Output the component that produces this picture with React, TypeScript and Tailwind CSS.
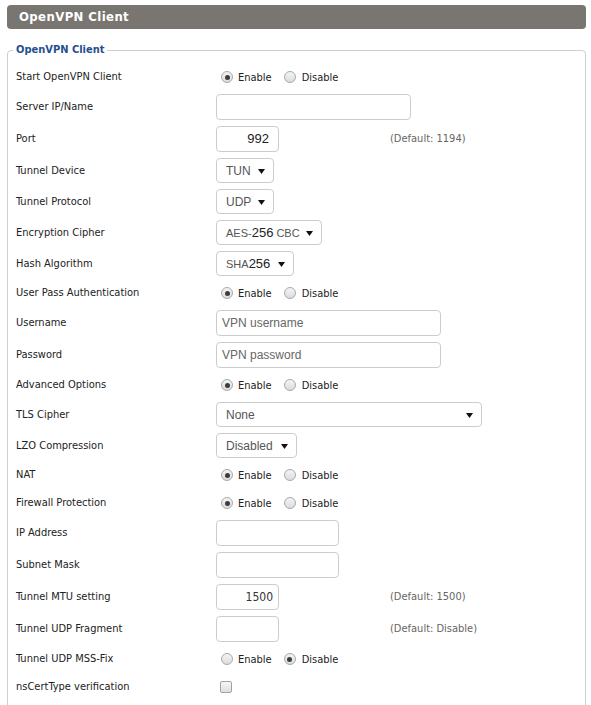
import React from "react";

const LABEL_FONT = "font-['DejaVu_Sans_Condensed','DejaVu_Sans',sans-serif]";
const FIELD_FONT = "font-['Liberation_Sans',Arial,sans-serif]";

type RowKind = "radio" | "input" | "select";

const rowHeight: Record<RowKind, string> = {
  radio: "h-[28px]",
  input: "h-[32px]",
  select: "h-[31px]",
};

function Row({
  label,
  kind,
  children,
  hint,
}: {
  label: string;
  kind: RowKind;
  children: React.ReactNode;
  hint?: string;
}) {
  return (
    <div className={`flex items-center ${rowHeight[kind]}`}>
      <div className="w-[200px] shrink-0 pt-[1px] text-[11px] text-[#222]">{label}</div>
      <div className="w-[174px] shrink-0 flex items-center">{children}</div>
      {hint && <div className="text-[11px] text-[#666]">{hint}</div>}
    </div>
  );
}

function Radio({ checked }: { checked: boolean }) {
  return (
    <span className="relative inline-flex h-[12px] w-[12px] shrink-0 items-center justify-center rounded-full border border-[#a9a9a9] bg-gradient-to-b from-[#f4f4f4] to-[#dcdcdc]">
      {checked && <span className="h-[5px] w-[5px] rounded-full bg-[#3c3c3c]" />}
    </span>
  );
}

function RadioPair({ enabled }: { enabled: boolean }) {
  return (
    <div className="flex items-center pl-[5px] text-[11px] text-[#222]">
      <div className="flex items-center">
        <Radio checked={enabled} />
        <span className="ml-[5px] mt-[3px]">Enable</span>
      </div>
      <div className="ml-[12px] flex items-center">
        <Radio checked={!enabled} />
        <span className="ml-[6px] mt-[3px]">Disable</span>
      </div>
    </div>
  );
}

function TextBox({
  width,
  value,
  placeholder,
  right,
  className = "",
}: {
  width: string;
  value?: React.ReactNode;
  placeholder?: string;
  right?: boolean;
  className?: string;
}) {
  return (
    <div
      className={`flex h-[26px] ${width} shrink-0 items-center rounded-[4px] border border-[#cccccc] bg-white ${
        right ? "justify-end pr-[9px]" : "pl-[5px]"
      } ${className}`}
    >
      {value !== undefined && value}
      {placeholder && (
        <span className={`${FIELD_FONT} text-[12px] text-[#666]`}>{placeholder}</span>
      )}
    </div>
  );
}

function SelectBox({ width, children }: { width: string; children: React.ReactNode }) {
  return (
    <div
      className={`flex h-[25px] ${width} shrink-0 items-center justify-between rounded-[4px] border border-[#cccccc] bg-white pl-[9px] pr-[8px]`}
    >
      <span className={`${FIELD_FONT} whitespace-nowrap text-[12px] text-[#555]`}>{children}</span>
      <svg width="7" height="7" viewBox="0 0 7 7" className="mt-[1px] shrink-0">
        <path d="M0 1 L7 1 L3.5 6 Z" fill="#111" />
      </svg>
    </div>
  );
}

export default function App() {
  return (
    <div className={`h-[705px] w-[591px] overflow-hidden bg-white pl-[7px] pr-[5px] pt-[5px] ${LABEL_FONT}`}>
      <div className="flex h-[24px] items-center rounded-[4px] bg-[#797571] pl-[12px]">
        <span className="text-[13px] font-bold tracking-[0.4px] text-white">OpenVPN Client</span>
      </div>

      <fieldset className="mt-[14px] rounded-[4px] border border-[#cfcfcf] pb-[10px] pl-[8px] pt-[6px]">
        <legend className="-ml-[3px] px-[3px] text-[11px] font-bold leading-[14px] text-[#25508f]">
          OpenVPN Client
        </legend>

        <Row label="Start OpenVPN Client" kind="radio">
          <RadioPair enabled />
        </Row>
        <Row label="Server IP/Name" kind="input">
          <TextBox width="w-[195px]" />
        </Row>
        <Row label="Port" kind="input" hint="(Default: 1194)">
          <TextBox
            width="w-[63px]"
            right
            value={<span className={`${FIELD_FONT} text-[13px] text-[#222]`}>992</span>}
          />
        </Row>
        <Row label="Tunnel Device" kind="select">
          <SelectBox width="w-[58px]">TUN</SelectBox>
        </Row>
        <Row label="Tunnel Protocol" kind="select">
          <SelectBox width="w-[58px]">UDP</SelectBox>
        </Row>
        <Row label="Encryption Cipher" kind="select">
          <SelectBox width="w-[106px]">
            <span className="text-[11px]">AES-</span>
            <span className="text-[13px] text-[#222]">256</span>
            <span className="ml-[3px] text-[11px]">CBC</span>
          </SelectBox>
        </Row>
        <Row label="Hash Algorithm" kind="select">
          <SelectBox width="w-[78px]">
            <span className="text-[11px]">SHA</span>
            <span className="text-[13px] text-[#222]">256</span>
          </SelectBox>
        </Row>
        <Row label="User Pass Authentication" kind="radio">
          <RadioPair enabled />
        </Row>
        <Row label="Username" kind="input">
          <TextBox width="w-[225px]" placeholder="VPN username" />
        </Row>
        <Row label="Password" kind="input">
          <TextBox width="w-[225px]" placeholder="VPN password" />
        </Row>
        <Row label="Advanced Options" kind="radio">
          <RadioPair enabled />
        </Row>
        <Row label="TLS Cipher" kind="select">
          <div className="w-[266px] shrink-0">
            <SelectBox width="w-[266px]">None</SelectBox>
          </div>
        </Row>
        <Row label="LZO Compression" kind="select">
          <SelectBox width="w-[81px]">Disabled</SelectBox>
        </Row>
        <Row label="NAT" kind="radio">
          <RadioPair enabled />
        </Row>
        <Row label="Firewall Protection" kind="radio">
          <RadioPair enabled />
        </Row>
        <Row label="IP Address" kind="input">
          <TextBox width="w-[123px]" />
        </Row>
        <Row label="Subnet Mask" kind="input">
          <TextBox width="w-[123px]" />
        </Row>
        <Row label="Tunnel MTU setting" kind="input" hint="(Default: 1500)">
          <TextBox
            width="w-[63px]"
            right
            className="!pr-[5px]"
            value={<span className="text-[12px] text-[#333]">1500</span>}
          />
        </Row>
        <Row label="Tunnel UDP Fragment" kind="input" hint="(Default: Disable)">
          <TextBox width="w-[63px]" />
        </Row>
        <Row label="Tunnel UDP MSS-Fix" kind="radio">
          <RadioPair enabled={false} />
        </Row>
        <Row label="nsCertType verification" kind="radio">
          <span className="ml-[4px] h-[12px] w-[12px] rounded-[2px] border border-[#a3a3a3] bg-gradient-to-b from-[#f6f6f6] to-[#dedede]" />
        </Row>
      </fieldset>
    </div>
  );
}
